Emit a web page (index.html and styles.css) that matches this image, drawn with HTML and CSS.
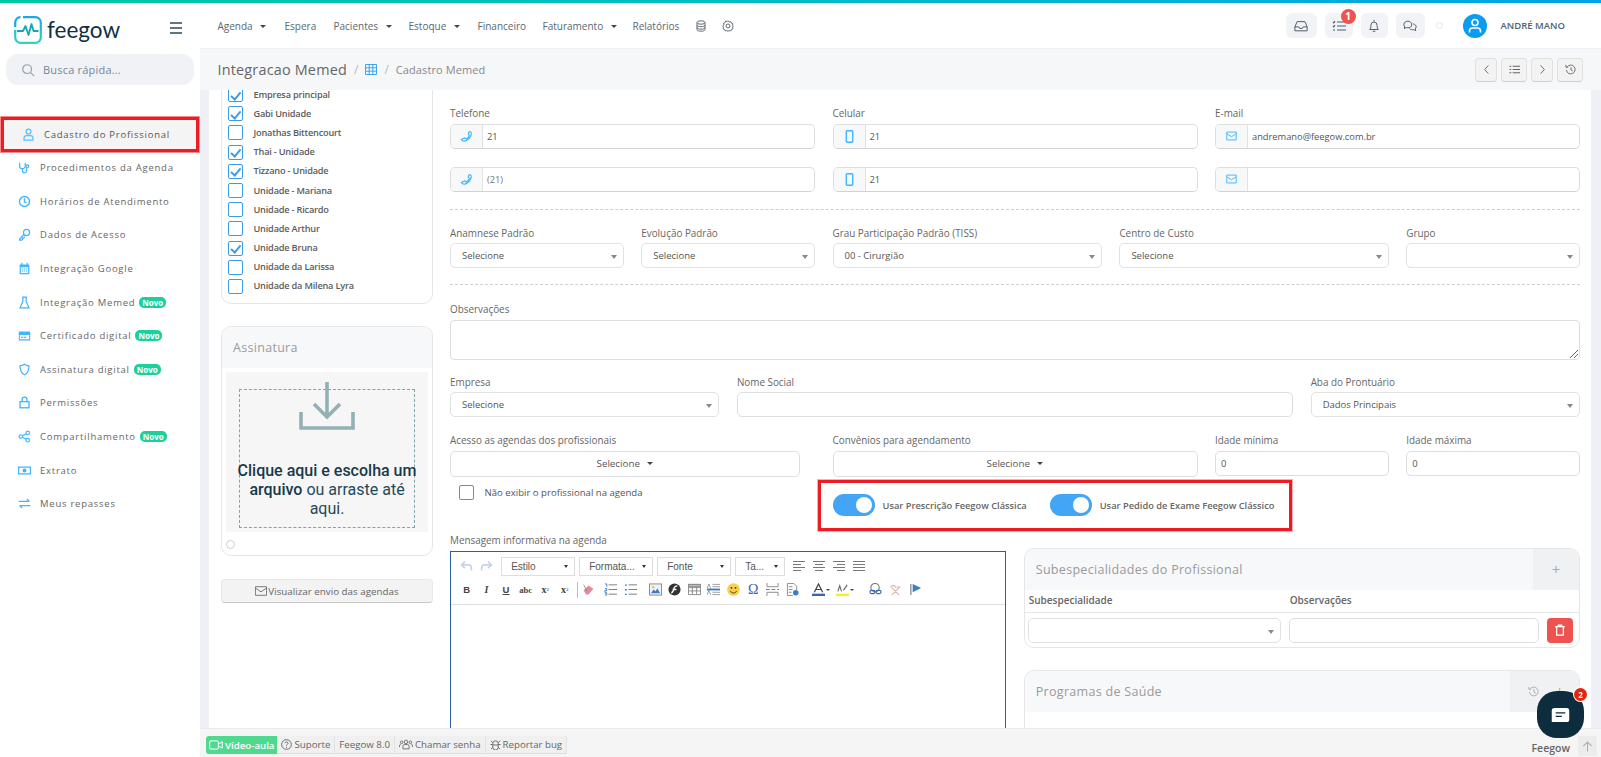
FILE: index.html
```html
<!DOCTYPE html>
<html lang="pt-BR">
<head>
<meta charset="utf-8">
<title>Feegow</title>
<link rel="stylesheet" href="styles.css">
</head>
<body>
<div class="topline"></div>
<div class="shell">
  <aside class="sidebar">
    <div class="brand">
      <svg class="logo" viewBox="0 0 28 28" fill="none"><defs><linearGradient id="lg" x1="0" y1="0" x2="0" y2="1"><stop offset="0" stop-color="#1aa7ec"/><stop offset="1" stop-color="#2dd4bf"/></linearGradient></defs><path d="M9 1.2H21.5a5.3 5.3 0 0 1 5.3 5.3V21.5a5.3 5.3 0 0 1-5.3 5.3H6.5a5.3 5.3 0 0 1-5.3-5.3V14" stroke="url(#lg)" stroke-width="2.2"/><path d="M1.2 11V6.5A5.3 5.3 0 0 1 6.5 1.2" stroke="#1aa7ec" stroke-width="2.2"/><path d="M3 15h6l2.5-5 3 9 3-11 2 7h5" stroke="#14a6b8" stroke-width="1.8" stroke-linejoin="round"/></svg>
      <span class="brand-name">feegow</span>
      <span class="burger"><i></i><i></i><i></i></span>
    </div>
    <div class="search">
      <svg class="ic14" viewBox="0 0 16 16" fill="none" stroke="#98a2ad" stroke-width="1.4"><circle cx="7" cy="7" r="5"/><path d="M11 11l4 4"/></svg>
      <span>Busca rápida...</span>
    </div>
    <nav class="menu">
      <a class="menu-item active"><svg class="mi" viewBox="0 0 16 16" fill="none" stroke="#5bbcff" stroke-width="1.5"><circle cx="8" cy="4.5" r="3"/><path d="M2.5 15v-2.5a3 3 0 0 1 3-3h5a3 3 0 0 1 3 3V15z"/></svg>Cadastro do Profissional</a>
      <a class="menu-item"><svg class="mi" viewBox="0 0 16 16" fill="none" stroke="#3fb5ff" stroke-width="1.5"><path d="M2 2v4a3.5 3.5 0 0 0 7 0V2M5.5 9.5V12a2.5 2.5 0 0 0 5 0V9"/><circle cx="11.5" cy="6.5" r="1.8"/></svg>Procedimentos da Agenda</a>
      <a class="menu-item"><svg class="mi" viewBox="0 0 16 16" fill="none" stroke="#3fb5ff" stroke-width="1.7"><circle cx="8" cy="8" r="6.2"/><path d="M8 4v4.3l2.5 1.5"/></svg>Horários de Atendimento</a>
      <a class="menu-item"><svg class="mi" viewBox="0 0 16 16" fill="none" stroke="#3fb5ff" stroke-width="1.5"><circle cx="10.5" cy="5.5" r="3.8"/><path d="M7.5 8L2 13.5V15h2.5l1-1v-1.5H7l1.5-2"/></svg>Dados de Acesso</a>
      <a class="menu-item"><svg class="mi" viewBox="0 0 16 16" fill="#3fb5ff"><path d="M4 1h1.5v2h5V1H12v2h2v12H2V3h2zM3.5 6.5v7h9v-7z"/><path d="M5 8h1.5v1.3H5zm2.3 0h1.5v1.3H7.3zm2.3 0h1.5v1.3H9.600zM5 10.500h1.500v1.300H5zm2.300 0h1.500v1.300H7.300zm2.300 0h1.500v1.300H9.600z"/></svg>Integração Google</a>
      <a class="menu-item"><svg class="mi" viewBox="0 0 16 16" fill="none" stroke="#3fb5ff" stroke-width="1.5"><path d="M5 1.500h6M6 1.500v5L2.500 14.500h11L10 6.500v-5"/></svg>Integração Memed <b class="novo">Novo</b></a>
      <a class="menu-item"><svg class="mi" viewBox="0 0 16 16" fill="#3fb5ff"><path d="M1 3h14v11H1zM2.300 7.500v5h11.400v-5zM4 9.500h2.500V11H4zm3.500 0H10V11H7.500z" fill-rule="evenodd"/></svg>Certificado digital <b class="novo">Novo</b></a>
      <a class="menu-item"><svg class="mi" viewBox="0 0 16 16" fill="none" stroke="#3fb5ff" stroke-width="1.5"><path d="M8 1.500c2 1.300 3.500 1.800 5.500 2 0 5-1 9-5.500 11-4.500-2-5.500-6-5.500-11 2-.2 3.500-.7 5.500-2z"/></svg>Assinatura digital <b class="novo">Novo</b></a>
      <a class="menu-item"><svg class="mi" viewBox="0 0 16 16" fill="none" stroke="#3fb5ff" stroke-width="1.6"><rect x="2.500" y="7" width="11" height="7.500"/><path d="M5 7V4.500a3 3 0 0 1 6 0V7"/></svg>Permissões</a>
      <a class="menu-item"><svg class="mi" viewBox="0 0 16 16" fill="none" stroke="#3fb5ff" stroke-width="1.400"><circle cx="3.500" cy="8" r="2.200"/><circle cx="12" cy="3.500" r="2.200"/><circle cx="12" cy="12.500" r="2.200"/><path d="M5.500 7l4.500-2.500M5.500 9l4.500 2.500"/></svg>Compartilhamento <b class="novo">Novo</b></a>
      <a class="menu-item"><svg class="mi" viewBox="0 0 16 16" fill="#3fb5ff"><path fill-rule="evenodd" d="M0 3h16v10H0zm1.500 1.500v7h13v-7zM8 5.500a2.500 2.500 0 1 1 0 5 2.500 2.500 0 0 1 0-5z"/></svg>Extrato</a>
      <a class="menu-item"><svg class="mi" viewBox="0 0 16 16" fill="none" stroke="#3fb5ff" stroke-width="1.500"><path d="M1 5.500h13M11 2.500l3 3M15 10.500H2M5 13.500l-3-3"/></svg>Meus repasses</a>
    </nav>
  </aside>

  <div class="stage">
    <header class="topbar">
      <nav class="topnav">
        <a class="tn w-agenda">Agenda <i class="caret"></i></a>
        <a class="tn w-espera">Espera</a>
        <a class="tn w-pac">Pacientes <i class="caret"></i></a>
        <a class="tn w-est">Estoque <i class="caret"></i></a>
        <a class="tn w-fin">Financeiro</a>
        <a class="tn w-fat">Faturamento <i class="caret"></i></a>
        <a class="tn w-rel">Relatórios</a>
        <svg class="tni" viewBox="0 0 12 12" fill="none" stroke="#5f6b75" stroke-width="1"><ellipse cx="6" cy="2.500" rx="4" ry="1.700"/><path d="M2 2.500v7c0 1 1.800 1.700 4 1.700s4-.7 4-1.700v-7M2 5c0 1 1.800 1.700 4 1.700S10 6 10 5M2 7.500c0 1 1.800 1.700 4 1.700s4-.7 4-1.700"/></svg>
        <svg class="tni gear" viewBox="0 0 12 12" fill="none" stroke="#5f6b75" stroke-width="1"><path d="M6 .8l1.200 1.100 1.600-.3.600 1.500 1.500.6-.3 1.600L11.200 6l-.6 1.200.3 1.600-1.500.6-.6 1.500-1.600-.3L6 11.200l-1.200-.6-1.600.3-.6-1.500-1.500-.6.300-1.600L.8 6l1.100-1.200-.3-1.600 1.500-.6.6-1.500 1.600.3z"/><circle cx="6" cy="6" r="2"/></svg>
      </nav>
      <div class="tools">
        <span class="tool t-inbox"><svg class="ic14" viewBox="0 0 16 14" fill="none" stroke="#4d5b66" stroke-width="1.100"><path d="M1 8l2.500-6h9L15 8v4.500H1zM1 8h4.500l1 1.800h3l1-1.800H15"/></svg></span>
        <span class="tool t-task"><svg class="ic14" viewBox="0 0 14 12" fill="none" stroke="#4d5b66" stroke-width="1.100"><path d="M5 2h9M5 6h9M5 10h9M1 2l.8.800L3 1.200M1 6l.8.800L3 5.200M1 10h2"/></svg><b class="count">1</b></span>
        <span class="tool t-bell"><svg class="ic14" viewBox="0 0 14 16" fill="none" stroke="#4d5b66" stroke-width="1.100"><path d="M2 12c1-1 1.500-2 1.500-5a3.500 3.500 0 0 1 7 0c0 3 .5 4 1.500 5zM7 1v2M5.500 14h3"/></svg></span>
        <span class="tool t-chat"><svg class="ic14" viewBox="0 0 16 14" fill="none" stroke="#4d5b66" stroke-width="1.100"><path d="M1 5.500C1 3 3 1.500 5.500 1.500S10 3 10 5.500 8 9 5.500 9c-.7 0-1.200 0-1.800-.2L1.500 10l.4-2C1.300 7.300 1 6.500 1 5.500z"/><path d="M11.500 4.500c2 .4 3.500 1.700 3.500 3.500 0 1-.4 1.700-1 2.300l.5 2-2.300-1.200c-1.700.4-3.700 0-4.700-1.300"/></svg></span>
        <span class="dot"></span>
        <span class="avatar"><svg viewBox="0 0 24 24" fill="none" stroke="#fff" stroke-width="1.600"><circle cx="12" cy="8.500" r="3"/><path d="M6.500 18.500v-1.500a3 3 0 0 1 3-3h5a3 3 0 0 1 3 3v1.500"/></svg></span>
        <span class="user">ANDRÉ MANO</span>
      </div>
    </header>

    <div class="crumbbar">
      <span class="crumb-title">Integracao Memed</span>
      <span class="crumb-sep">/</span>
      <svg class="grid-ic" viewBox="0 0 12 11" fill="none" stroke="#3fa3ee" stroke-width="1"><path d="M.5.500h11v10H.5zM.5 3.800h11M.5 7.200h11M4.200.500v10M7.800.500v10"/></svg>
      <span class="crumb-sep">/</span>
      <span class="crumb-sub">Cadastro Memed</span>
      <div class="crumb-btns">
        <span class="cb n"><svg viewBox="0 0 8 12" fill="none" stroke="#666" stroke-width="1"><path d="M6 1.500L2 6l4 4.500"/></svg></span>
        <span class="cb w"><svg viewBox="0 0 12 10" fill="none" stroke="#666" stroke-width="1.200"><path d="M4 1.500h8M4 5h8M4 8.500h8M.5 1.500h2M.5 5h2M.5 8.500h2"/></svg></span>
        <span class="cb n"><svg viewBox="0 0 8 12" fill="none" stroke="#666" stroke-width="1"><path d="M2 1.500L6 6l-4 4.500"/></svg></span>
        <span class="cb w"><svg viewBox="0 0 12 12" fill="none" stroke="#666" stroke-width="1"><path d="M2.500 3A4.800 4.800 0 1 1 1.500 6.500M1 1v2.500h2.500M6.500 3.500V6.500l2 1.200"/></svg></span>
      </div>
    </div>

    <main class="main">
      <div class="col-left">
        <section class="units">
          <label class="unit"><i class="box on"></i>Empresa principal</label>
          <label class="unit"><i class="box on"></i>Gabi Unidade</label>
          <label class="unit"><i class="box"></i>Jonathas Bittencourt</label>
          <label class="unit"><i class="box on"></i>Thai - Unidade</label>
          <label class="unit"><i class="box on"></i>Tizzano - Unidade</label>
          <label class="unit"><i class="box"></i>Unidade - Mariana</label>
          <label class="unit"><i class="box"></i>Unidade - Ricardo</label>
          <label class="unit"><i class="box"></i>Unidade Arthur</label>
          <label class="unit"><i class="box on"></i>Unidade Bruna</label>
          <label class="unit"><i class="box"></i>Unidade da Larissa</label>
          <label class="unit"><i class="box"></i>Unidade da Milena Lyra</label>
        </section>
        <section class="sign">
          <h3 class="sign-head">Assinatura</h3>
          <div class="drop">
            <div class="drop-inner">
              <svg class="drop-ic" viewBox="0 0 56 48" fill="none" stroke="#93b1b5" stroke-width="3.600"><path d="M28 0v34M15 22l13 13 13-13M2 30v16h52V30"/></svg>
              <p class="drop-text"><b>Clique aqui e escolha um arquivo</b> ou arraste até aqui.</p>
            </div>
          </div>
          <span class="radio"></span>
        </section>
        <div class="wide-btn"><svg class="ic12" viewBox="0 0 14 11" fill="none" stroke="#666" stroke-width="1"><path d="M.5.500h13v10H.5zM.5 2l6.500 4.500L13.500 2"/></svg>Visualizar envio das agendas</div>
      </div>

      <div class="col-form">
        <div class="row r-contact">
          <div class="f s4"><label class="lb">Telefone</label><div class="ig"><span class="addon"><svg viewBox="0 0 14 14" fill="none" stroke="#3fb5ff" stroke-width="1.300"><path d="M1.500 10.500c1.500 2 4 2 6.500 0s4.500-5 4-7.500c-.2-1.300-2-1.500-2.500-.5L9 4.500 10 6c-.5 1.500-2 3-3.500 3.500L5 8.500l-2 1z"/></svg></span><span class="val">21</span></div></div>
          <div class="f s4"><label class="lb">Celular</label><div class="ig"><span class="addon"><svg viewBox="0 0 14 14" fill="none" stroke="#3fb5ff" stroke-width="1.500"><rect x="3.500" y=".8" width="7" height="12.400" rx="1"/></svg></span><span class="val">21</span></div></div>
          <div class="f s4"><label class="lb">E-mail</label><div class="ig"><span class="addon"><svg class="mail" viewBox="0 0 14 12" fill="none" stroke="#3fb5ff" stroke-width="1.200"><path d="M1 1h12v10H1zM1 3l6 4 6-4"/></svg></span><span class="val">andremano@feegow.com.br</span></div></div>
        </div>
        <div class="row r-contact2">
          <div class="f s4"><div class="ig"><span class="addon"><svg viewBox="0 0 14 14" fill="none" stroke="#3fb5ff" stroke-width="1.300"><path d="M1.500 10.500c1.500 2 4 2 6.500 0s4.500-5 4-7.500c-.2-1.300-2-1.500-2.500-.5L9 4.500 10 6c-.5 1.500-2 3-3.500 3.500L5 8.500l-2 1z"/></svg></span><span class="val muted">(21)</span></div></div>
          <div class="f s4"><div class="ig"><span class="addon"><svg viewBox="0 0 14 14" fill="none" stroke="#3fb5ff" stroke-width="1.500"><rect x="3.500" y=".8" width="7" height="12.400" rx="1"/></svg></span><span class="val">21</span></div></div>
          <div class="f s4"><div class="ig"><span class="addon"><svg class="mail" viewBox="0 0 14 12" fill="none" stroke="#3fb5ff" stroke-width="1.200"><path d="M1 1h12v10H1zM1 3l6 4 6-4"/></svg></span><span class="val"></span></div></div>
        </div>
        <hr class="dash">
        <div class="row">
          <div class="f s2"><label class="lb">Anamnese Padrão</label><div class="sel">Selecione</div></div>
          <div class="f s2"><label class="lb">Evolução Padrão</label><div class="sel">Selecione</div></div>
          <div class="f s3"><label class="lb">Grau Participação Padrão (TISS)</label><div class="sel">00 - Cirurgião</div></div>
          <div class="f s3"><label class="lb">Centro de Custo</label><div class="sel">Selecione</div></div>
          <div class="f s2"><label class="lb">Grupo</label><div class="sel"></div></div>
        </div>
        <hr class="dash d2">
        <div class="f obs"><label class="lb">Observações</label><div class="area"><svg class="grip" viewBox="0 0 8 8" stroke="#666" stroke-width="1"><path d="M0 8L8 0M4 8l4-4"/></svg></div></div>
        <div class="row r-emp">
          <div class="f s3"><label class="lb">Empresa</label><div class="sel">Selecione</div></div>
          <div class="f s6"><label class="lb">Nome Social</label><div class="inp"></div></div>
          <div class="f s3"><label class="lb">Aba do Prontuário</label><div class="sel">Dados Principais</div></div>
        </div>
        <div class="row r-acc">
          <div class="f s4"><label class="lb">Acesso as agendas dos profissionais</label><div class="multi acc">Selecione <i class="caret"></i></div></div>
          <div class="f s4"><label class="lb">Convênios para agendamento</label><div class="multi">Selecione <i class="caret"></i></div></div>
          <div class="f s2"><label class="lb">Idade mínima</label><div class="inp num">0</div></div>
          <div class="f s2"><label class="lb">Idade máxima</label><div class="inp num">0</div></div>
        </div>
        <div class="row r-opts">
          <label class="s4 hide-opt"><i class="box"></i>Não exibir o profissional na agenda</label>
          <div class="s8 toggles-wrap">
            <div class="toggles">
              <span class="tg"><i class="sw"></i>Usar Prescrição Feegow Clássica</span>
              <span class="tg"><i class="sw"></i>Usar Pedido de Exame Feegow Clássico</span>
            </div>
          </div>
        </div>
        <div class="row r-bottom">
          <div class="s6 msg">
            <label class="lb">Mensagem informativa na agenda</label>
            <div class="editor">
              <div class="tb">
                <div class="tb-row">
                  <span class="tbi first"><svg viewBox="0 0 16 14" fill="none" stroke="#c5d4e4" stroke-width="2"><path d="M6 1L2 5l4 4M2 5h8a4 4 0 0 1 4 4v3"/></svg></span>
                  <span class="tbi"><svg viewBox="0 0 16 14" fill="none" stroke="#c5d4e4" stroke-width="2"><path d="M10 1l4 4-4 4M14 5H6a4 4 0 0 0-4 4v3"/></svg></span>
                  <span class="combo c-est">Estilo</span>
                  <span class="combo c-for">Formata...</span>
                  <span class="combo c-fon">Fonte</span>
                  <span class="combo c-ta">Ta...</span>
                  <span class="aligns">
                    <svg viewBox="0 0 12 10" stroke="#777"><path d="M0 .5h12M0 3.500h8M0 6.500h12M0 9.500h8"/></svg>
                    <svg viewBox="0 0 12 10" stroke="#777"><path d="M0 .5h12M2 3.500h8M0 6.500h12M2 9.500h8"/></svg>
                    <svg viewBox="0 0 12 10" stroke="#777"><path d="M0 .5h12M4 3.500h8M0 6.500h12M4 9.500h8"/></svg>
                    <svg viewBox="0 0 12 10" stroke="#777"><path d="M0 .5h12M0 3.500h12M0 6.500h12M0 9.500h12"/></svg>
                  </span>
                </div>
                <div class="tb-row r2">
                  <span class="tbi first txt b">B</span>
                  <span class="tbi txt i">I</span>
                  <span class="tbi txt u">U</span>
                  <span class="tbi txt sm">abc</span>
                  <span class="tbi txt s2x">x<sub>2</sub></span>
                  <span class="tbi txt s2x">x<sup>2</sup></span>
                  <span class="tsep"></span>
                  <span class="tbi"><svg viewBox="0 0 16 16"><path d="M2 9l6-6 6 4-6 7H5z" fill="#e58a99"/><path d="M2 2l4 8" stroke="#888" stroke-width="1"/></svg></span>
                  <span class="tbi g1"><svg viewBox="0 0 14 14" fill="none"><path d="M5 2h9M5 7h9M5 12h9" stroke="#777"/><path d="M1 1h2v3M1 6h2v2H1v2h2M1 11h2v2H1" stroke="#3a7fc2"/></svg></span>
                  <span class="tbi"><svg viewBox="0 0 14 14" fill="none"><path d="M5 2h9M5 7h9M5 12h9" stroke="#777"/><path d="M1 1.500h2v1.500H1zM1 6.500h2V8H1zM1 11.500h2V13H1z" fill="#3a7fc2"/></svg></span>
                  <span class="tbi g2"><svg viewBox="0 0 14 14"><rect x=".5" y="1" width="13" height="12" fill="#eef2f6" stroke="#888"/><path d="M2 11l3-4 2 2 2-3 3 5z" fill="#3a7fc2"/><circle cx="4.500" cy="4.500" r="1.200" fill="#e7b64a"/></svg></span>
                  <span class="tbi"><svg viewBox="0 0 14 14"><circle cx="7" cy="7" r="6.500" fill="#333"/><path d="M10 3C7 3 6.500 5 6 7S5 10.500 3.500 10.500M5 7h4" stroke="#fff" stroke-width="1.400" fill="none"/></svg></span>
                  <span class="tbi"><svg viewBox="0 0 14 14" fill="none" stroke="#888"><path d="M.5 1.500h13v11H.5zM.5 5h13M.5 8.500h13M4.700 1.500v11M9.300 1.500v11"/><path d="M.5 1.500h13V4H.5z" fill="#bbb"/></svg></span>
                  <span class="tbi"><svg viewBox="0 0 14 14" fill="none"><path d="M6 1.500h8M6 4h8M6 10h8M6 12.500h8M0 13l2-5 2 5M0 6l2-5 2 5" stroke="#999"/><path d="M0 7h14" stroke="#3a7fc2" stroke-width="2"/></svg></span>
                  <span class="tbi"><svg viewBox="0 0 14 14"><circle cx="7" cy="7" r="6.800" fill="#f6cf4e"/><circle cx="4.800" cy="5.200" r="1" fill="#333"/><circle cx="9.200" cy="5.200" r="1" fill="#333"/><path d="M3.500 8.500c1.500 3 5.500 3 7 0" fill="none" stroke="#333"/></svg></span>
                  <span class="tbi omega">Ω</span>
                  <span class="tbi"><svg viewBox="0 0 14 14" fill="none" stroke="#888"><path d="M1 0v4h12V0M1 14v-4h12v4"/><path d="M0 7h14" stroke="#3a7fc2" stroke-dasharray="4 2"/></svg></span>
                  <span class="tbi"><svg viewBox="0 0 14 14" fill="none" stroke="#888"><path d="M1.500.5h7l3 3V8M1.500.5v13h6M3 4h4M3 7h4M3 10h3"/><circle cx="10.500" cy="10.500" r="3" fill="#3a7fc2" stroke="none"/></svg></span>
                  <span class="tbi g3 wide"><svg viewBox="0 0 14 14"><path d="M2.500 10L7 1l4.500 9M4 7h6" fill="none" stroke="#444" stroke-width="1.300"/><rect y="11.500" width="14" height="2.500" fill="#3a66b0"/></svg><i class="mini"></i></span>
                  <span class="tbi wide"><svg viewBox="0 0 14 14"><path d="M2 9l2-6 2 6M8 8l4-6" fill="none" stroke="#666" stroke-width="1.200"/><rect y="11.500" width="14" height="2.500" fill="#f6f01e"/></svg><i class="mini"></i></span>
                  <span class="tbi g4"><svg viewBox="0 0 14 14" fill="none" stroke="#3a66b0" stroke-width="1.200"><circle cx="6.500" cy="5" r="4.500" stroke="#777"/><rect x="1" y="8" width="5.500" height="3.500" rx="1.700"/><rect x="7.500" y="8" width="5.500" height="3.500" rx="1.700"/></svg></span>
                  <span class="tbi"><svg viewBox="0 0 14 14" fill="none" stroke="#d9b6ae" stroke-width="1.200"><path d="M2 5a2.500 2.500 0 0 1 5 0M8 5a2.500 2.500 0 0 1 4 0M3 13l8-8M11 13L3 5"/></svg></span>
                  <span class="tbi"><svg viewBox="0 0 14 14"><path d="M2 1v12" stroke="#777" stroke-width="1.200"/><path d="M4 1l9 4.500L4 10z" fill="#3a7fc2"/></svg></span>
                </div>
              </div>
              <div class="ed-body"></div>
            </div>
          </div>
          <div class="s6 side">
            <section class="panel p-sub">
              <div class="p-head"><h3>Subespecialidades do Profissional</h3><span class="p-act a-sm">+</span></div>
              <div class="p-cols"><b class="pc1">Subespecialidade</b><b>Observações</b></div>
              <div class="p-row"><div class="sel pc-sel"></div><div class="inp pc-inp"></div><span class="del"><svg viewBox="0 0 12 14" fill="none" stroke="#fff" stroke-width="1.500"><path d="M0 3h12M4 3V1h4v2M2 3v10h8V3"/></svg></span></div>
            </section>
            <section class="panel p-prog">
              <div class="p-head"><h3>Programas de Saúde</h3><span class="p-act a-lg"><svg viewBox="0 0 12 12" fill="none" stroke="#aaa" stroke-width="1"><path d="M2.500 3A4.800 4.800 0 1 1 1.500 6.500M1 1v2.500h2.500M6.500 3.500V6.500l2 1.200"/></svg><span>+</span></span></div>
            </section>
          </div>
        </div>
      </div>
    </main>

    <footer class="foot">
      <span class="fi video"><svg viewBox="0 0 15 11" fill="none" stroke="#fff" stroke-width="1.100"><rect x=".6" y="1" width="9.500" height="9" rx="1"/><path d="M10 4.500L14.400 2v7L10 6.500"/></svg>Vídeo-aula</span>
      <span class="fi"><svg viewBox="0 0 12 12" fill="none" stroke="#666"><circle cx="6" cy="6" r="5.300"/><path d="M4.300 4.500C4.500 2.800 7.800 2.800 7.800 4.600 7.800 5.800 6 5.800 6 7.300M6 8.500v1.200"/></svg>Suporte</span>
      <span class="fi">Feegow 8.0</span>
      <span class="fi"><svg class="w15" viewBox="0 0 16 12" fill="none" stroke="#666"><circle cx="8" cy="3" r="2"/><circle cx="3" cy="3.500" r="1.500"/><circle cx="13" cy="3.500" r="1.500"/><path d="M4.500 11V8a2 2 0 0 1 2-2h3a2 2 0 0 1 2 2v3zM.5 9V7.500A1.500 1.500 0 0 1 2 6M15.500 9V7.500A1.500 1.500 0 0 0 14 6"/></svg>Chamar senha</span>
      <span class="fi"><svg viewBox="0 0 12 12" fill="none" stroke="#666"><path d="M3 5a3 3 0 0 1 6 0v4a3 3 0 0 1-6 0zM3 6H.5M9 6h2.500M3 9l-2 2M9 9l2 2M3 4L1 2M9 4l2-2M3 6.500h6"/></svg>Reportar bug</span>
      <span class="foot-right">Feegow</span>
      <span class="up"><svg viewBox="0 0 12 12" fill="none" stroke="#aaa" stroke-width="1.100"><path d="M6 11.500V1M1.500 5.500L6 1l4.500 4.500"/></svg></span>
    </footer>
  </div>
</div>
<div class="chat-fab">
  <svg viewBox="0 0 20 16"><path d="M3 0h14a3 3 0 0 1 3 3v10a3 3 0 0 1-3 3H0V3a3 3 0 0 1 3-3z" fill="#fff"/><path d="M4.500 5.500h11M4.500 9.500h7" stroke="#0d2c3d" stroke-width="1.500"/></svg>
  <b class="chat-badge">2</b>
</div>
</body>
</html>
```
FILE: styles.css
```css
* { box-sizing: border-box; }
html, body { margin: 0; height: 757px; overflow: hidden; }
body { font-family: "Open Sans", sans-serif; font-size: 10.5px; color: #555; background: #fff; }
svg { display: block; flex: none; }
i { font-style: normal; }
h3, p { margin: 0; font-weight: 400; }

.topline { height: 3px; background: linear-gradient(90deg, #00c9a0 0%, #00bfc0 40%, #00a3e8 100%); }
.shell { display: flex; height: 754px; }

/* sidebar */
.sidebar { width: 200px; flex: none; background: #fff; display: flex; flex-direction: column; }
.brand { display: flex; align-items: center; height: 51px; padding: 3px 0 0 14px; }
.logo { width: 28px; height: 28px; }
.brand-name { font-family: Lato, sans-serif; font-size: 22.500px; color: #11303f; margin-left: 5px; line-height: 28px; width: 74px; }
.burger { display: flex; flex-direction: column; gap: 3px; margin-left: 49px; width: 12px; margin-top: -4px; }
.burger i { height: 1.700px; background: #5f7580; }
.search { display: flex; align-items: center; gap: 8px; height: 31px; margin: 0 6px; padding-left: 15px; background: #f0f2f6; border-radius: 12px; font-size: 11px; color: #75879c; letter-spacing: .2px; }
.ic14 { width: 14px; height: 14px; }
.ic12 { width: 12px; height: 10px; }
.menu { display: flex; flex-direction: column; margin-top: 32px; }
.menu-item { display: flex; align-items: center; height: 33.600px; padding-left: 18px; font-size: 9.500px; letter-spacing: .75px; color: #666; white-space: nowrap; }
.mi { width: 13px; height: 13px; margin-right: 9px; }
.menu-item.active { margin: 0 1px -1px; height: 35px; padding-left: 18px; background: #f4f4f4; border: 3px solid #ed1c24; outline: 1px solid rgba(237, 28, 36, .5); color: #555; }
.novo { margin-left: 4px; padding: 0 3px; height: 11px; line-height: 11px; border-radius: 5px; background: #1ccf9d; color: #fff; font-size: 8px; font-weight: 700; letter-spacing: 0; }

/* top bar */
.stage { flex: 1; min-width: 0; display: flex; flex-direction: column; }
.topbar { height: 45px; flex: none; display: flex; align-items: center; justify-content: space-between; background: #fff; padding: 0 0 0 17.500px; }
.topnav { display: flex; align-items: center; font-size: 10px; color: #596773; }
.tn { display: block; white-space: nowrap; }
.caret { display: inline-block; width: 0; height: 0; margin-left: 5px; vertical-align: 2px; border: 3.200px solid transparent; border-top-color: #444; border-bottom: 0; }
.w-agenda { width: 67px; } .w-espera { width: 49px; } .w-pac { width: 75px; } .w-est { width: 69px; }
.w-fin { width: 65px; } .w-fat { width: 90px; } .w-rel { width: 62px; }
.tni { width: 12px; height: 12px; }
.gear { margin-left: 15px; }
.tools { display: flex; align-items: center; margin-right: 36px; }
.tool { position: relative; display: flex; align-items: center; justify-content: center; height: 25px; background: #f1f3f6; border-radius: 6px; }
.t-inbox { width: 31px; } .t-task { width: 28px; margin-left: 8px; } .t-bell { width: 27px; margin-left: 8px; } .t-chat { width: 29px; margin-left: 8px; }
.count { position: absolute; top: -4px; right: -3px; width: 15px; height: 15px; border-radius: 50%; background: #ef5350; color: #fff; font-size: 10px; line-height: 15px; text-align: center; }
.dot { width: 7px; height: 7px; border: 1px solid #e3e6ea; border-radius: 50%; margin-left: 11px; }
.avatar { width: 24px; height: 24px; border-radius: 50%; background: #0a9cf0; margin-left: 20px; }
.user { margin-left: 14px; font-size: 9.500px; font-weight: 600; color: #4f6473; white-space: nowrap; }

/* breadcrumb */
.crumbbar { height: 42px; flex: none; display: flex; align-items: center; padding-left: 17.500px; background: #f6f7f9; border-top: 1px solid #eff0f3; }
.crumb-title { font-size: 14.400px; color: #666; letter-spacing: .2px; }
.crumb-sep { margin: 0 7px; color: #bbb; font-size: 12px; }
.grid-ic { width: 12px; height: 11px; }
.crumb-sub { font-size: 11px; color: #888; letter-spacing: .1px; }
.crumb-btns { margin-left: auto; margin-right: 18px; display: flex; gap: 4px; }
.cb { display: flex; align-items: center; justify-content: center; height: 24px; background: #f3f3f3; border: 1px solid #e0e0e0; border-bottom-color: #d0d0d0; border-radius: 4px; }
.cb.n { width: 22px; } .cb.w { width: 26px; }
.cb svg { width: 11px; height: 11px; }

/* main */
.main { height: 638px; flex: none; margin: 0 10px 0 9px; padding: 0 11px 0 12px; background: #fff; display: grid; grid-template-columns: 212px 1130px; column-gap: 17px; overflow: hidden; box-shadow: -9px 0 0 #eef0f5, 10px 0 0 #eef0f5; }
.col-left { display: flex; flex-direction: column; align-items: stretch; }
.units { margin-top: -14px; padding: 8px 6px 7px; border: 1px solid #e6e6e6; border-radius: 10px; display: flex; flex-direction: column; }
.unit { display: flex; align-items: center; height: 19.200px; line-height: 10px; font-size: 9.200px; font-weight: 600; letter-spacing: -.2px; color: #5c5c5c; white-space: nowrap; }
.box { position: relative; flex: none; width: 15px; height: 15px; border: 1.200px solid #3f9be8; border-radius: 2px; margin-right: 10.500px; background: #fff; }
.box.on::after { content: ""; position: absolute; left: 4px; top: 1.500px; width: 4px; height: 7.500px; border: solid #3f9be8; border-width: 0 2.800px 2.800px 0; transform: rotate(40deg); }
.sign { margin-top: 22px; height: 230px; border: 1px solid #e6e6e6; border-radius: 10px; overflow: hidden; position: relative; }
.sign-head { height: 41px; padding-left: 11px; background: #f7f8fa; font-size: 12.500px; line-height: 41px; color: #9a9a9a; letter-spacing: .3px; }
.drop { margin: 4px 4px 0; height: 160px; padding: 17px 13px 4px; background: #f6f6f6; }
.drop-inner { height: 139px; border: 1px dashed #7fa5a8; position: relative; text-align: center; }
.drop-ic { width: 56px; height: 48px; margin: -8px auto 0; }
.drop-text { margin: 31px -5px 0; font-family: Roboto, sans-serif; font-size: 16px; line-height: 19px; color: #1f4a5a; }
.drop-text b { font-weight: 500; color: #17394a; }
.radio { display: block; width: 9px; height: 9px; margin: 8px 0 0 4px; border: 1px solid #ccc; border-radius: 50%; }
.wide-btn { margin-top: 23px; height: 24px; display: flex; align-items: center; justify-content: center; gap: 1px; background: #f3f3f3; border: 1px solid #e8e8e8; border-bottom: 1px solid #c8c8c8; border-radius: 4px; font-size: 9.800px; color: #666; }

/* form */
.col-form { padding-top: 16px; min-width: 0; }
.row { display: grid; grid-template-columns: repeat(12, 1fr); column-gap: 17.500px; }
.s2 { grid-column: span 2; } .s3 { grid-column: span 3; } .s4 { grid-column: span 4; } .s6 { grid-column: span 6; } .s8 { grid-column: span 8; }
.f { min-width: 0; }
.lb { display: block; height: 14px; line-height: 14px; margin-bottom: 3.500px; font-size: 9.900px; color: #666; white-space: nowrap; }
.r-contact2 { margin-top: 18px; }
.ig { display: flex; height: 25px; border: 1px solid #dedede; border-bottom-color: #d2d2d2; border-radius: 5px; overflow: hidden; background: #fff; }
.addon { width: 32px; flex: none; display: flex; align-items: center; justify-content: center; background: #f7f8f9; border-right: 1px solid #e2e2e2; }
.addon svg { width: 13px; height: 13px; }
.addon svg.mail { width: 11px; height: 10px; }
.val { padding-left: 4px; line-height: 23px; font-size: 9.300px; color: #555; }
.muted { color: #777; }
.dash { margin: 17px 0 16px; height: 0; border: 0; border-top: 1px dashed #cfcfcf; }
.d2 { margin: 16px 0 17px; }
.sel { position: relative; height: 25px; padding-left: 11px; line-height: 23px; background: #fff; border: 1px solid #e2e2e2; border-radius: 5px; font-size: 9.500px; color: #555; }
.sel::after { content: ""; position: absolute; right: 6px; top: 11px; border: 3.500px solid transparent; border-top: 4px solid #888; border-bottom: 0; }
.inp { height: 25px; background: #fff; border: 1px solid #dedede; border-radius: 5px; }
.num { padding-left: 5px; line-height: 23px; font-size: 9.500px; }
.area { position: relative; height: 40px; background: #fff; border: 1px solid #dedede; border-radius: 4px; }
.grip { position: absolute; right: 1px; bottom: 1px; width: 8px; height: 8px; }
.r-emp { margin-top: 15px; }
.r-acc { margin-top: 16px; }
.multi { height: 26px; line-height: 24px; text-align: center; background: #fff; border: 1px solid #dedede; border-radius: 5px; font-size: 9.800px; color: #555; }
.acc { width: 350px; }
.r-opts { height: 53px; margin-top: 3px; }
.hide-opt { display: flex; align-items: center; align-self: start; height: 15px; margin-top: 5px; padding-left: 9px; font-size: 9.600px; color: #555; white-space: nowrap; }
.toggles-wrap { min-width: 0; }
.toggles { width: 474px; height: 51px; margin-left: -15px; padding-left: 12px; display: flex; align-items: center; gap: 23px; border: 3px solid #ed1c24; outline: 1px solid rgba(237, 28, 36, .35); }
.tg { display: flex; align-items: center; gap: 8px; font-size: 9.300px; font-weight: 600; color: #666; white-space: nowrap; }
.sw { position: relative; flex: none; width: 42px; height: 22px; border-radius: 11px; background: #42a5f5; }
.sw::after { content: ""; position: absolute; right: 3px; top: 3px; width: 16px; height: 16px; border-radius: 50%; background: #fff; }

.r-bottom { margin-top: 0; }
.msg .lb { margin-bottom: 4px; }
.editor { height: 180px; border: 1.500px solid #2c5ea8; border-bottom: 0; background: #fff; }
.tb { height: 53px; border-bottom: 1px solid #dedede; padding: 5px 0 0 6px; }
.tb-row { display: flex; align-items: center; height: 19px; }
.r2 { margin-top: 4px; height: 20px; }
.tbi { width: 19.600px; flex: none; display: flex; align-items: center; justify-content: center; }
.tbi.first { margin-left: 0; }
.tbi svg { width: 13px; height: 13px; }
.txt { font-family: "Liberation Serif", serif; font-size: 10px; color: #444; font-weight: 700; }
.b { font-family: "Liberation Sans", sans-serif; font-size: 9.500px; }
.i { font-style: italic; }
.u { text-decoration: underline; font-family: "Liberation Sans", sans-serif; font-size: 9.500px; }
.sm { font-size: 8.500px; }
.s2x sub, .s2x sup { font-size: 5px; line-height: 0; color: #3a7fc2; }
.tsep { width: 1px; height: 16px; margin: 0 1px 0 2px; background: #bbb; }
.g1 { margin-left: 3px; } .g2 { margin-left: 5px; } .g3 { margin-left: 7px; } .g4 { margin-left: 9px; }
.wide { width: 24px; gap: 1px; }
.mini { border: 2px solid transparent; border-top-color: #444; border-bottom: 0; }
.omega { font-family: "Liberation Serif", serif; font-size: 14px; color: #3a66b0; }
.combo { position: relative; flex: none; height: 19px; margin-right: 4px; padding-left: 9px; line-height: 17px; border: 1px solid #dedede; font-family: "Liberation Sans", sans-serif; font-size: 10px; color: #555; white-space: nowrap; }
.combo::after { content: ""; position: absolute; right: 6px; top: 7px; border: 2.500px solid transparent; border-top: 3px solid #333; border-bottom: 0; }
.c-est { width: 74px; margin-left: 5px; } .c-for { width: 74px; } .c-fon { width: 74px; } .c-ta { width: 50px; margin-right: 0; }
.aligns { display: flex; gap: 8px; margin-left: 8px; }
.aligns svg { width: 12px; height: 10px; }

.side { display: flex; flex-direction: column; padding-top: 15px; }
.panel { border: 1px solid #e6e6e6; border-radius: 10px; overflow: hidden; }
.p-head { display: flex; height: 41px; align-items: stretch; background: #f7f8fa; }
.p-head h3 { flex: 1; padding-left: 11px; line-height: 41px; font-size: 12.500px; color: #9a9a9a; letter-spacing: .3px; }
.p-act { display: flex; align-items: center; justify-content: center; gap: 16px; background: #f0f1f3; color: #aaa; font-size: 15px; }
.p-act svg { width: 11px; height: 11px; }
.a-sm { width: 46px; } .a-lg { width: 69px; padding-left: 3px; }
.p-cols { display: flex; height: 23px; line-height: 21px; padding-left: 4px; border-bottom: 1px solid #e6e6e6; font-size: 10px; color: #666; font-weight: 600; }
.p-cols b { font-weight: 600; }
.pc1 { width: 261px; }
.p-row { display: flex; height: 34px; padding: 5px 4px 0 3px; }
.pc-sel { width: 253px; }
.pc-inp { width: 250px; margin-left: 8px; }
.del { width: 26px; height: 25px; margin-left: 8px; display: flex; align-items: center; justify-content: center; background: #ef5350; border-radius: 4px; }
.del svg { width: 10px; height: 12px; }
.p-prog { margin-top: 22px; height: 80px; }

/* footer */
.foot { flex: 1; display: flex; align-items: flex-start; padding: 7px 4px 0 6px; background: #f5f5f5; border-top: 1px solid #ececec; }
.fi { display: flex; align-items: center; gap: 2px; height: 18px; padding: 0 4px; background: #f0f0f0; border-right: 1px solid #e2e2e2; border-bottom: 1px solid #ddd; font-size: 9.700px; color: #666; white-space: nowrap; }
.fi svg { width: 11px; height: 11px; }
.fi svg.w15 { width: 14px; }
.video { background: #4fd98e; color: #fff; font-weight: 600; border: 0; border-radius: 3px 0 0 3px; padding: 0 3px; }
.video svg { width: 14px; height: 10px; }
.foot-right { margin-left: auto; margin-top: 5px; font-size: 10.500px; font-weight: 600; color: #666; }
.up { display: flex; align-items: center; justify-content: center; width: 19px; height: 20px; margin-left: 8px; background: #ececec; border-radius: 2px; }
.up svg { width: 11px; height: 11px; }

/* chat widget */
.chat-fab { position: fixed; left: 1537px; top: 691px; width: 47px; height: 47px; display: flex; align-items: center; justify-content: center; background: #0d2c3d; border-radius: 20px; }
.chat-fab svg { width: 19px; height: 14px; }
.chat-badge { position: absolute; right: -3px; top: -3px; width: 13px; height: 13px; border-radius: 50%; background: #e0260c; box-shadow: 0 0 0 1px #fff; color: #fff; font-size: 8px; line-height: 13px; text-align: center; }
```
